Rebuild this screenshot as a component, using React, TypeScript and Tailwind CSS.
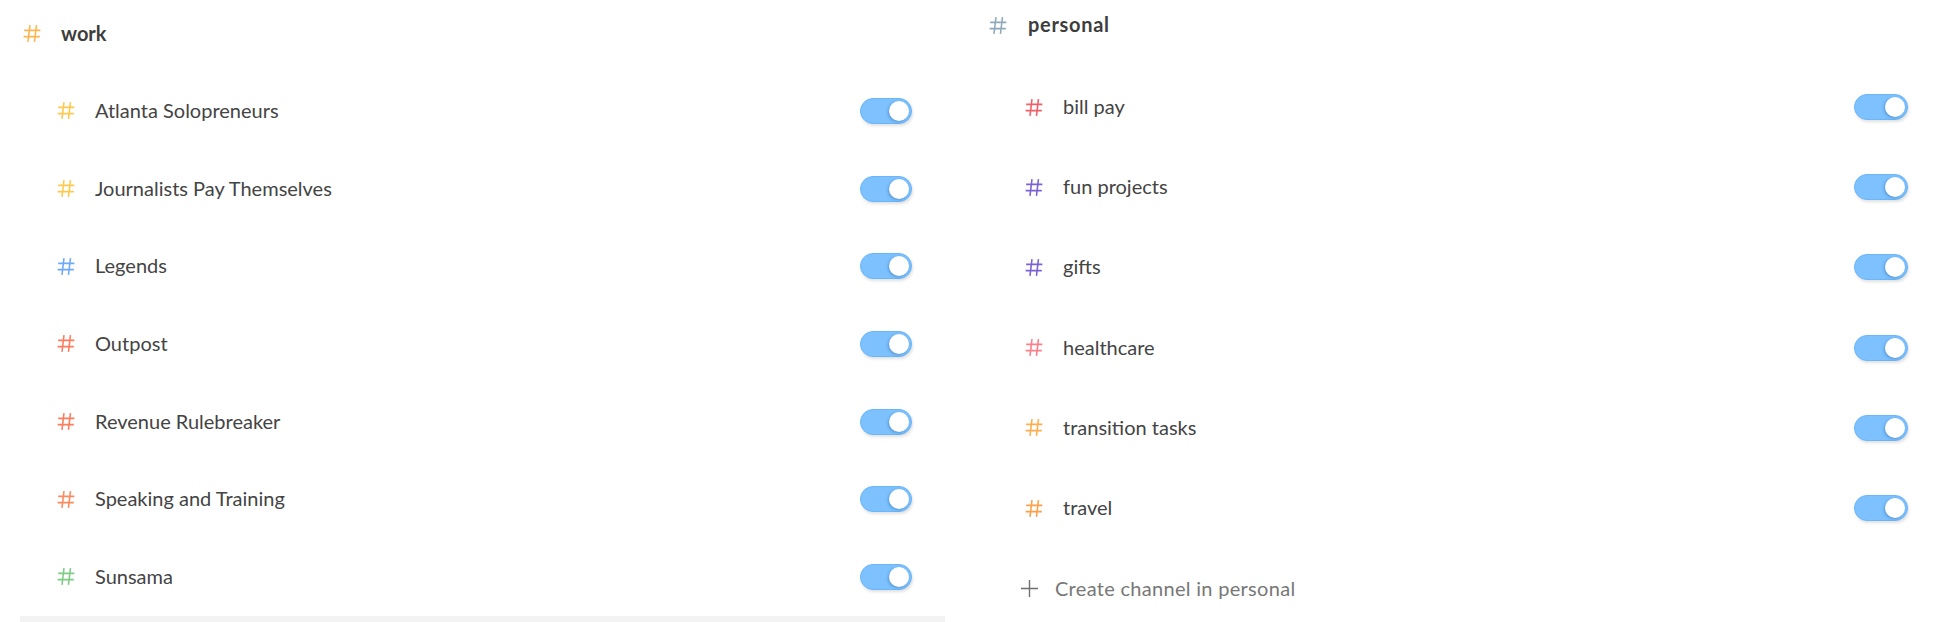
const work = [
  { name: "Atlanta Solopreneurs", color: "#fdc94f" },
  { name: "Journalists Pay Themselves", color: "#fdc94f" },
  { name: "Legends", color: "#6fa8fb" },
  { name: "Outpost", color: "#fb7d5e" },
  { name: "Revenue Rulebreaker", color: "#fb7d5e" },
  { name: "Speaking and Training", color: "#fb8a5e" },
  { name: "Sunsama", color: "#7fcb85" },
];

const personal = [
  { name: "bill pay", color: "#ef5f68" },
  { name: "fun projects", color: "#7c62d6" },
  { name: "gifts", color: "#7c62d6" },
  { name: "healthcare", color: "#fb7f8a" },
  { name: "transition tasks", color: "#fdae4f" },
  { name: "travel", color: "#fda04a" },
];

function HashIcon({ color, className }: { color: string; className: string }) {
  return (
    <svg viewBox="0 0 16 17" fill="none" stroke={color} strokeWidth="1.4" className={className}>
      <path d="M6.2 1 4.4 16M12 1l-1.8 15M1 5.7h14.5M.5 11.3H15" />
    </svg>
  );
}

function Toggle({ width }: { width: string }) {
  return (
    <div className={`flex h-[26px] items-center justify-end rounded-full border border-[#68b6fb] bg-[#7dc1ff] pr-[2px] shadow-[1px_2px_3px_rgba(0,0,0,0.12)] ${width}`}>
      <div className="h-[20px] w-[20px] rounded-full bg-white shadow-[-1px_1px_3px_rgba(40,100,160,0.45)]" />
    </div>
  );
}

function Row({ name, color, height, toggleWidth }: { name: string; color: string; height: string; toggleWidth: string }) {
  return (
    <div className={`flex shrink-0 items-center ${height}`}>
      <HashIcon color={color} className="h-[19px] w-[18px] shrink-0" />
      <span className="ml-[20px] pb-[2px] text-[20px] text-[#444444]">{name}</span>
      <div className="ml-auto">
        <Toggle width={toggleWidth} />
      </div>
    </div>
  );
}

export default function App() {
  return (
    <div className="flex h-[622px] w-[1933px] overflow-hidden bg-white font-['Lato',sans-serif]">
      <div className="flex w-[945px] shrink-0 flex-col pl-[23px]">
        <div className="mb-[5px] flex h-[67px] shrink-0 items-center">
          <HashIcon color="#fdb54f" className="h-[19px] w-[18px] shrink-0" />
          <span className="ml-[20px] pb-[2px] text-[20px] font-bold text-[#3d3d3d]">work</span>
        </div>
        <div className="flex shrink-0 flex-col pr-[33px] pl-[34px]">
          {work.map((c) => (
            <Row key={c.name} name={c.name} color={c.color} height="h-[77.7px]" toggleWidth="w-[52px]" />
          ))}
        </div>
        <div className="mt-auto -ml-[3px] h-[6px] shrink-0 bg-[#f3f3f3]" />
      </div>

      <div className="flex flex-1 flex-col pl-[44px]">
        <div className="mb-[17px] flex h-[50px] shrink-0 items-center">
          <HashIcon color="#8fa9bb" className="h-[19px] w-[18px] shrink-0" />
          <span className="ml-[21px] pb-[2px] text-[20px] font-bold tracking-[0.7px] text-[#3d3d3d]">personal</span>
        </div>
        <div className="flex shrink-0 flex-col pr-[25px] pl-[36px]">
          {personal.map((c) => (
            <Row key={c.name} name={c.name} color={c.color} height="h-[80.2px]" toggleWidth="w-[54px]" />
          ))}
          <div className="-ml-[4px] flex h-[73px] shrink-0 items-center pt-[8px]">
            <svg viewBox="0 0 16 16" fill="none" stroke="#6f6f6f" strokeWidth="1.3" className="h-[17px] w-[17px] shrink-0">
              <path d="M8 0v16M0 8h16" />
            </svg>
            <span className="ml-[17px] pb-[2px] text-[20px] tracking-[0.3px] text-[#777777]">Create channel in personal</span>
          </div>
        </div>
      </div>
    </div>
  );
}
